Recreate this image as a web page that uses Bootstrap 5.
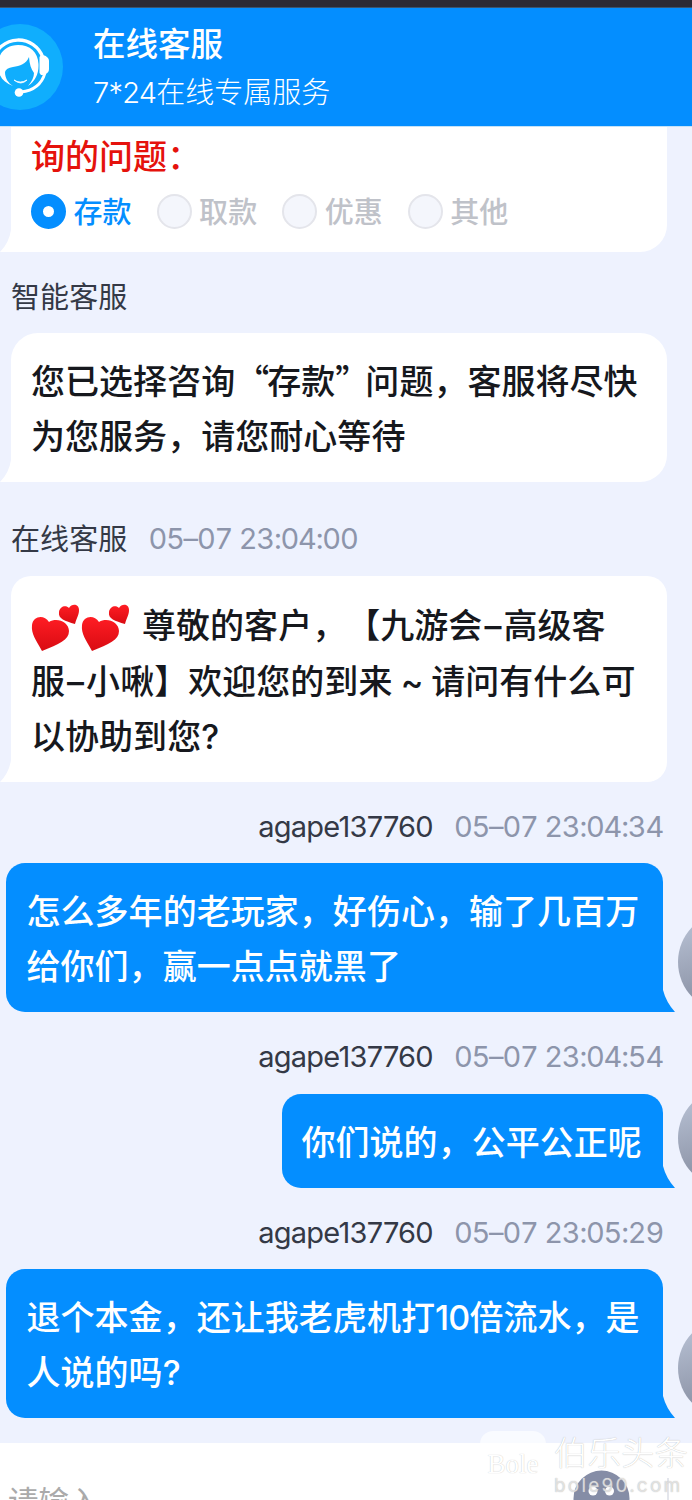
<!DOCTYPE html>
<html lang="zh-CN">
<head>
<meta charset="utf-8">
<meta name="viewport" content="width=device-width, initial-scale=1">
<title>在线客服</title>
<link href="https://cdn.jsdelivr.net/npm/bootstrap@5.3.0/dist/css/bootstrap.min.css" rel="stylesheet">
<style>
body{background:#eef2fe;font-family:Inter,"Noto Sans CJK SC",sans-serif;color:#16181d}
.screen{width:692px;height:1500px}
.status-strip{height:8px;background:#2c2a35;border-bottom:1px solid #3c5570}
.top-bar{height:119px;background:#048eff;border-bottom:1px solid #c4e2f8}
.agent{width:86px;height:86px;margin:16px 0 0 -23px}
.agent-title{font-size:32.5px;line-height:40px;font-weight:500;margin-top:17px}
.agent-sub{font-size:29px;line-height:40px;font-weight:300;margin-top:8px}
.agent-sub span{letter-spacing:-.8px}
.chat-log{height:1316px}
.meta{height:40px;line-height:40px;font-size:29px;color:#343946;letter-spacing:-.75px;white-space:nowrap}
.meta .zh{letter-spacing:.1px;position:relative;top:1px}
.meta time{color:#8d95ab;font-variant-numeric:tabular-nums;letter-spacing:-1.2px;margin-left:21px}
.bubble{font-size:34px;letter-spacing:.04px;line-height:54.5px;font-weight:500;white-space:nowrap}
.incoming{background:#fff;width:656px;margin-left:11px;padding:22px 20px 0;border-radius:27px 27px 27px 0}
.outgoing{background:#048eff;color:#fff;padding:22px 20px 0 20.5px;border-radius:19px 19px 0 19px}
.quote{font-family:"Noto Sans CJK SC",sans-serif;line-height:1}
.tail{position:absolute;bottom:0;width:12px;height:22px}
.incoming .tail{left:-11px}
.outgoing .tail{right:-12px}
.user-pic{width:100px;height:100px;background:linear-gradient(165deg,#b0b9cc 20%,#858c9f 85%)}
.choice{width:125.6px;font-size:29px;color:#bfc2c9;font-weight:500}
.choice b{font-weight:500;padding-top:4px}
.ring{width:35px;height:35px;border:2px solid #e4e5eb;background:#f4f6fc;margin-right:7.5px}
.choice.on{color:#048eff}
.choice.on .ring{border:12px solid #048eff;background:#fff}
.hearts{width:50px;height:50px;margin-top:-2px;vertical-align:middle}
.dash{padding:0 2px}
.input-bar{height:57px}
.hint{font-size:30.5px;line-height:40px;color:#aaa;padding:39px 0 0 8px}
.emoji-btn{left:573px;top:27px;width:57px;height:57px}
.rule{left:667px;top:35px;width:2px;height:22px;background:#e4e6ec}
.stamp{left:480px;top:1431px;width:212px;height:69px}
.stamp-logo{width:66px;height:64px;border-radius:13px;background:rgba(255,255,255,.65);font:27px/66px "Liberation Serif",serif;color:#fff;text-shadow:0 0 1px #bbb}
.stamp-name{font-size:33.5px;line-height:44px;font-weight:300;color:#fff;text-shadow:0 0 1px #aaa}
.stamp-site{font-size:19px;line-height:22px;letter-spacing:2.2px;color:rgba(255,255,255,.6);text-shadow:0 0 1px #aaa}
</style>
</head>
<body>
<main class="screen position-relative overflow-hidden d-flex flex-column">
  <div class="status-strip flex-shrink-0"></div>
  <header class="top-bar d-flex flex-shrink-0 text-white">
    <svg class="agent flex-shrink-0" viewBox="-23 24 86 86">
      <circle cx="20" cy="67" r="43" fill="#10aefd"/>
      <path d="M-7 60A26 26 0 0 1 43 58" fill="none" stroke="#fff" stroke-width="3.400"/>
      <path d="M13 86C3 82-2 76-2 65C-2 52 7 45 18 45C30 45 38 52 38.500 64C39 74 35 81 28 86C32 81 34 77 34 73C31 69 29.500 64 29 57C26 64 20 66 13 67Q6 68 5 72C5 78 8 83 13 86Z" fill="#fff"/>
      <path d="M41 55C46 55 49 58 49 61V69C49 73 45 75 41 75L39.500 73V57Z" fill="#fff"/>
      <path d="M45 73Q40 90 21 92" fill="none" stroke="#fff" stroke-width="2.800"/>
      <circle cx="19" cy="92.500" r="4.300" fill="#fff"/>
      <path d="M14 80Q20 84 27 80Q21 86 14 80Z" fill="#fff" stroke="#fff" stroke-width=".8"/>
    </svg>
    <div style="margin-left:30px">
      <div class="agent-title">在线客服</div>
      <div class="agent-sub"><span>7*24</span>在线专属服务</div>
    </div>
  </header>

  <section class="chat-log flex-shrink-0">
    <div class="bubble incoming position-relative" style="height:125px;border-top-left-radius:0;border-top-right-radius:0;padding-top:3px">
      <div style="color:#e5120c">询的问题：</div>
      <div class="d-flex align-items-center" style="height:54px">
        <div class="choice on d-flex align-items-center"><span class="ring rounded-circle"></span><b>存款</b></div>
        <div class="choice d-flex align-items-center"><span class="ring rounded-circle"></span><b>取款</b></div>
        <div class="choice d-flex align-items-center"><span class="ring rounded-circle"></span><b>优惠</b></div>
        <div class="choice d-flex align-items-center"><span class="ring rounded-circle"></span><b>其他</b></div>
      </div>
      <svg class="tail" viewBox="0 0 12 22"><path d="M12 0H11Q9 13 0 22H12Z" fill="#fff"/></svg>
    </div>

    <div class="meta" style="margin:25px 0 0 11px"><span class="zh">智能客服</span></div>
    <div class="bubble incoming position-relative" style="height:149px;margin-top:16px">
      <div>您已选择咨询<span class="quote" style="letter-spacing:-2px">“</span>存款<span class="quote" style="letter-spacing:-4px">”</span>问题，客服将尽快</div>
      <div>为您服务，请您耐心等待</div>
      <svg class="tail" viewBox="0 0 12 22"><path d="M12 0H11Q9 13 0 22H12Z" fill="#fff"/></svg>
    </div>

    <div class="meta" style="margin:37px 0 0 11px"><span class="zh">在线客服</span><time>05–07 23:04:00</time></div>
    <div class="bubble incoming position-relative" style="height:206px;margin-top:17px;border-radius:20px 20px 20px 0;line-height:55.5px">
      <div style="height:55.5px"><svg class="hearts" viewBox="0 0 50 50"><defs><linearGradient id="red" x2="0" y2="1"><stop stop-color="#ff1d24"/><stop offset="1" stop-color="#d90b12"/></linearGradient></defs><path d="M11 48C5 37 0 31 1 22C2 13 13 11 18 19C26 14 38 19 38 28C38 37 28 41 11 48Z" fill="url(#red)"/><path d="M44 21C34 18 27 16 28 9C29 3 35 2 38 5C41 0 48 1 48 7C48 12 46 14 44 21Z" fill="url(#red)"/></svg><svg class="hearts" viewBox="0 0 50 50"><path d="M11 48C5 37 0 31 1 22C2 13 13 11 18 19C26 14 38 19 38 28C38 37 28 41 11 48Z" fill="url(#red)"/><path d="M44 21C34 18 27 16 28 9C29 3 35 2 38 5C41 0 48 1 48 7C48 12 46 14 44 21Z" fill="url(#red)"/></svg><span style="margin-left:11px">尊敬的客户，</span><span class="d-inline-block">【九游会<span class="dash">–</span>高级客</span></div>
      <div>服<span class="dash">–</span>小啾】欢迎您的到来<span style="letter-spacing:-.7px"> ~ </span>请问有什么可</div>
      <div>以协助到您?</div>
      <svg class="tail" viewBox="0 0 12 22"><path d="M12 0H11Q9 13 0 22H12Z" fill="#fff"/></svg>
    </div>

    <div class="meta text-end" style="margin:25px 29px 0 0">agape137760<time>05–07 23:04:34</time></div>
    <div class="d-flex align-items-end" style="margin:16px 0 0 6px;gap:15px">
      <div class="bubble outgoing position-relative flex-shrink-0" style="width:657px;height:149px">
        <div>怎么多年的老玩家，好伤心，输了几百万</div>
        <div>给你们，赢一点点就黑了</div>
        <svg class="tail" viewBox="0 0 12 22"><path d="M0 0Q3 12 12 22H0Z" fill="#048eff"/></svg>
      </div>
      <div class="user-pic rounded-circle flex-shrink-0"></div>
    </div>

    <div class="meta text-end" style="margin:25px 29px 0 0">agape137760<time>05–07 23:04:54</time></div>
    <div class="d-flex align-items-end" style="margin:17px 0 0 282px;gap:15px;height:94px">
      <div class="bubble outgoing position-relative flex-shrink-0" style="width:381px;height:94px;padding-left:19.5px">
        <div>你们说的，公平公正呢</div>
        <svg class="tail" viewBox="0 0 12 22"><path d="M0 0Q3 12 12 22H0Z" fill="#048eff"/></svg>
      </div>
      <div class="user-pic rounded-circle flex-shrink-0"></div>
    </div>

    <div class="meta text-end" style="margin:25px 29px 0 0">agape137760<time>05–07 23:05:29</time></div>
    <div class="d-flex align-items-end" style="margin:16px 0 0 6px;gap:15px">
      <div class="bubble outgoing position-relative flex-shrink-0" style="width:657px;height:149px">
        <div>退个本金，还让我老虎机打<span style="letter-spacing:-.8px">10</span>倍流水，是</div>
        <div>人说的吗?</div>
        <svg class="tail" viewBox="0 0 12 22"><path d="M0 0Q3 12 12 22H0Z" fill="#048eff"/></svg>
      </div>
      <div class="user-pic rounded-circle flex-shrink-0"></div>
    </div>
  </section>

  <footer class="input-bar bg-white position-relative overflow-hidden flex-shrink-0">
    <div class="hint">请输入</div>
    <svg class="emoji-btn position-absolute" viewBox="0 0 57 57"><circle cx="28.500" cy="28.500" r="28" fill="#858da6"/><circle cx="20" cy="21" r="4.500" fill="#fff"/><circle cx="36.500" cy="21" r="4.500" fill="#fff"/></svg>
    <div class="rule position-absolute"></div>
  </footer>

  <div class="stamp position-absolute d-flex gap-2">
    <div class="stamp-logo text-center flex-shrink-0">Bole</div>
    <div class="text-nowrap"><div class="stamp-name">伯乐头条</div><div class="stamp-site">bole90.com</div></div>
  </div>
</main>
<script src="https://cdn.jsdelivr.net/npm/bootstrap@5.3.0/dist/js/bootstrap.bundle.min.js"></script>
</body>
</html>
